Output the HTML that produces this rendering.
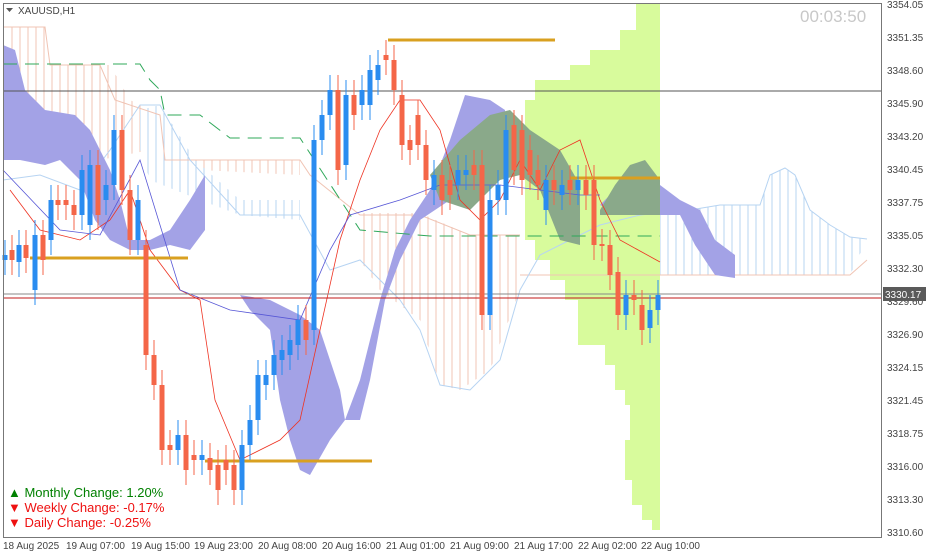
<!DOCTYPE html>
<html><head><meta charset="utf-8"><style>
body{margin:0;width:926px;height:556px;background:#fff;overflow:hidden;font-family:"Liberation Sans",sans-serif}
svg{position:absolute;left:0;top:0}
.ax{font-size:10px;fill:#444;font-family:"Liberation Sans",sans-serif}
</style></head><body>
<svg width="926" height="556" viewBox="0 0 926 556">
<defs>
<pattern id="hb" width="8" height="10" patternUnits="userSpaceOnUse"><line x1="4" y1="0" x2="4" y2="10" stroke="#b7d4f2" stroke-width="1"/></pattern>
<pattern id="hp" width="8" height="10" patternUnits="userSpaceOnUse"><line x1="4" y1="0" x2="4" y2="10" stroke="#f0c4b4" stroke-width="1"/></pattern>
</defs>
<rect x="0" y="0" width="926" height="556" fill="#fff"/>
<polygon fill="#d8fb9c" points="660,3 636,3 636,30 620,30 620,50 590,50 590,65 570,65 570,80 535,80 535,100 525,100 525,240 535,240 535,260 550,260 550,280 565,280 565,300 578,300 578,345 605,345 605,365 615,365 615,390 625,390 625,405 630,405 630,440 625,440 625,480 632,480 632,505 642,505 642,520 652,520 652,530 660,530"/>
<polygon fill="url(#hp)" points="5,27 45,27 48,65 110,65 130,100 160,115 165,160 300,160 300,175 200,170 150,150 100,160 5,160"/>
<polygon fill="url(#hb)" points="140,110 160,105 195,160 240,200 300,200 300,220 240,215 200,200 150,180 140,150"/>
<polygon fill="url(#hp)" points="360,213 420,213 470,235 520,235 520,290 490,370 460,390 440,385 420,320 380,290 360,260"/>
<polygon fill="url(#hb)" points="660,213 690,210 720,205 760,205 770,175 785,168 795,175 810,210 830,225 850,237 867,239 850,275 660,275"/>
<polyline fill="none" stroke="#b7d4f2" points="660,213 690,210 720,205 760,205 770,175 785,168 795,175 810,210 830,225 850,237 867,239"/>
<polyline fill="none" stroke="#f0c4b4" points="520,275 850,275 867,260"/>
<polyline fill="none" stroke="#f0c4b4" points="3,27 45,27 50,65 100,65 115,100 160,115 165,160 300,160 310,175 360,215 420,215 470,235 520,235"/>
<polyline fill="none" stroke="#b7d4f2" points="3,180 40,175 80,190 110,150 140,105 160,105 190,160 240,215 300,215 330,270 360,260 400,300 420,330 440,385 470,390 500,360 520,290 540,255 570,240 600,225 640,215 660,213"/>
<g fill="#a3a2e6">
<polygon points="3,45 15,50 25,90 45,110 75,115 90,130 100,150 110,170 120,200 130,240 150,240 170,230 190,200 205,175 205,230 190,250 170,245 150,250 130,250 110,240 95,220 80,180 60,160 45,165 20,160 3,160"/>
<polygon points="240,295 270,300 300,315 320,330 340,390 345,420 330,440 310,475 300,470 290,440 280,400 270,330 250,310"/>
<polygon points="345,420 360,380 380,300 395,250 410,220 430,190 450,140 465,95 490,100 505,110 505,160 480,170 450,200 420,220 400,260 385,300 370,380 360,420"/>
<polygon points="600,205 615,190 635,180 660,185 680,200 700,210 715,240 735,255 735,278 715,275 695,245 680,215 660,215 620,215"/>
</g>
<g fill="#8aa98a">
<polygon points="430,175 460,140 490,115 510,110 530,130 560,150 580,185 580,245 560,240 540,190 520,175 500,180 470,210 440,200"/>
<polygon points="600,210 615,185 630,165 645,160 660,180 660,215 600,215"/>
</g>
<polyline fill="none" stroke="#2fa85a" stroke-dasharray="14,8" points="3,64 140,64 150,80 160,90 165,115 200,115 230,138 300,138 360,230 430,236 660,236"/>
<polyline fill="none" stroke="#ee3322" stroke-width="0.8" points="10,190 40,230 80,240 110,220 130,190 150,250 180,290 200,300 215,400 240,460 280,440 300,420 320,330 340,240 360,180 380,130 400,100 420,100 440,130 460,200 480,220 500,200 520,160 540,190 560,150 580,140 600,200 620,240 660,262"/>
<polyline fill="none" stroke="#5656d6" stroke-width="0.8" points="3,170 60,230 100,235 140,160 180,290 230,310 300,320 330,250 350,215 400,200 440,185 470,185 500,185 540,190 580,195 600,195"/>
<line x1="3" y1="91" x2="881" y2="91" stroke="#555" stroke-width="1"/>
<line x1="3" y1="294" x2="881" y2="294" stroke="#888" stroke-width="1"/>
<line x1="3" y1="298" x2="881" y2="298" stroke="#c01818" stroke-width="1"/>
<g stroke="#d9a020" stroke-width="3">
<line x1="388" y1="40" x2="555" y2="40"/>
<line x1="30" y1="258" x2="188" y2="258"/>
<line x1="205" y1="461" x2="372" y2="461"/>
<line x1="570" y1="178" x2="660" y2="178"/>
</g>
<g id="c"></g>
<rect x="3.5" y="3.5" width="878" height="534" fill="none" stroke="#777"/>
<text x="18" y="14" font-size="10" fill="#444">XAUUSD,H1</text>
<polygon points="6,8 13,8 9.5,12" fill="#555"/>
<text x="800" y="22" font-size="17" fill="#c8c8c8">00:03:50</text>
<g class="ax">
<text x="887" y="8">3354.05</text><text x="887" y="41">3351.35</text><text x="887" y="74">3348.60</text><text x="887" y="107">3345.90</text><text x="887" y="140">3343.20</text><text x="887" y="173">3340.45</text><text x="887" y="206">3337.75</text><text x="887" y="239">3335.05</text><text x="887" y="272">3332.30</text><text x="887" y="305">3329.60</text><text x="887" y="338">3326.90</text><text x="887" y="371">3324.15</text><text x="887" y="404">3321.45</text><text x="887" y="437">3318.75</text><text x="887" y="470">3316.00</text><text x="887" y="503">3313.30</text><text x="887" y="536">3310.60</text>
<text x="3" y="549">18 Aug 2025</text><text x="66" y="549">19 Aug 07:00</text><text x="131" y="549">19 Aug 15:00</text><text x="194" y="549">19 Aug 23:00</text><text x="258" y="549">20 Aug 08:00</text><text x="322" y="549">20 Aug 16:00</text><text x="386" y="549">21 Aug 01:00</text><text x="450" y="549">21 Aug 09:00</text><text x="514" y="549">21 Aug 17:00</text><text x="578" y="549">22 Aug 02:00</text><text x="641" y="549">22 Aug 10:00</text>
</g>
<rect x="883" y="287" width="43" height="14" fill="#5a5a5a"/>
<text x="885" y="298" font-size="10" fill="#fff">3330.17</text>
<text x="8" y="497" font-size="13" fill="#008000">▲ Monthly Change: 1.20%</text>
<text x="8" y="512" font-size="13" fill="#ee1111">▼ Weekly Change: -0.17%</text>
<text x="8" y="527" font-size="13" fill="#ee1111">▼ Daily Change: -0.25%</text>
</svg>
<script>
var d=[[5,260,255,1],[12,250,260,0],[19,245,262,1],[26,245,258,0],[35,235,290,1],[43,235,260,0],[51,200,240,1],[58,200,205,0],[66,200,205,0],[74,205,215,0],[82,170,215,1],[90,165,225,1],[98,165,215,0],[106,185,200,1],[114,130,185,1],[122,130,190,0],[130,190,240,0],[138,200,240,1],[146,245,355,0],[154,355,385,0],[162,385,450,0],[170,445,450,0],[178,435,450,1],[186,435,470,0],[194,455,460,0],[202,455,460,1],[210,458,470,0],[218,465,490,0],[226,460,470,0],[234,465,490,0],[242,445,490,1],[250,420,445,1],[258,375,420,1],[266,375,385,1],[274,355,375,1],[282,350,360,1],[290,340,355,1],[298,320,345,1],[306,320,340,0],[314,140,330,1],[322,115,140,1],[330,90,115,1],[338,90,170,0],[346,95,165,1],[354,95,115,0],[362,90,105,1],[370,70,105,1],[378,65,80,1],[386,55,60,0],[394,60,90,0],[402,95,145,0],[410,140,150,0],[418,115,145,0],[426,145,180,0],[434,175,190,1],[442,175,200,0],[450,180,195,0],[458,170,185,1],[466,170,175,1],[474,165,175,0],[482,165,315,0],[490,200,315,1],[498,185,200,1],[506,130,200,1],[514,125,170,0],[522,130,180,0],[530,150,175,0],[538,170,185,0],[546,180,210,1],[554,180,190,0],[562,185,195,1],[570,180,190,0],[578,180,190,1],[586,180,195,0],[594,180,245,0],[602,244,246,0],[610,245,275,0],[618,272,315,0],[626,295,315,1],[634,295,300,0],[642,305,330,0],[650,310,328,1],[658,295,310,1]];
var s='';d.forEach(function(c){var col=c[3]?'#2a8cf0':'#f46648';var t=Math.min(c[1],c[2]),b=Math.max(c[1],c[2]);s+='<line x1="'+c[0]+'" x2="'+c[0]+'" y1="'+(t-15)+'" y2="'+(b+15)+'" stroke="'+col+'"/><rect x="'+(c[0]-2.5)+'" y="'+t+'" width="5" height="'+Math.max(1,b-t)+'" fill="'+col+'"/>';});
document.getElementById('c').innerHTML=s;
</script>
</body></html>
